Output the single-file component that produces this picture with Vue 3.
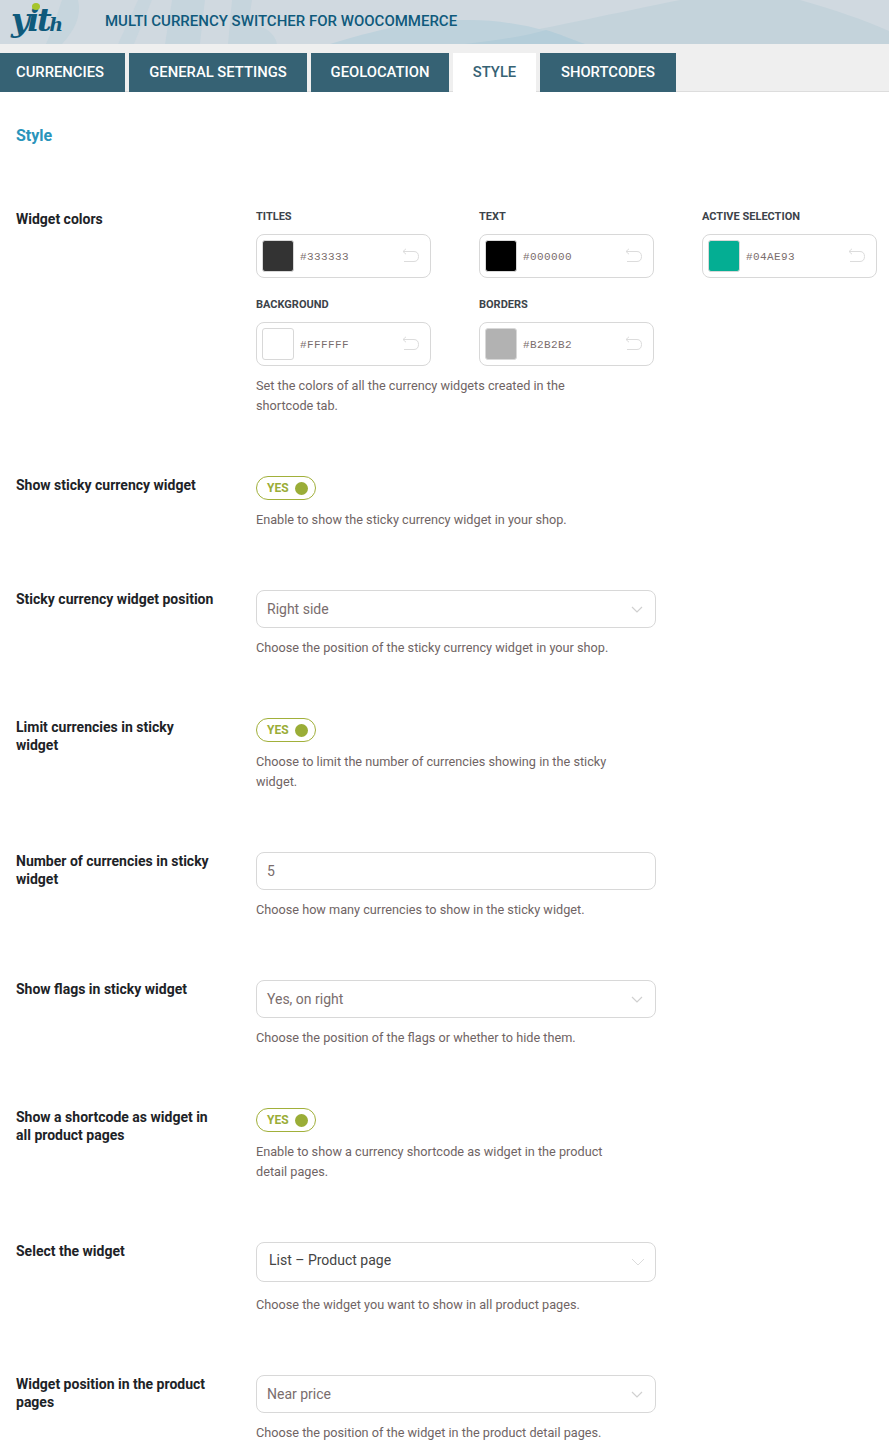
<template>
  <div class="page">
    <header class="top">
      <svg class="waves" viewBox="0 0 889 44" preserveAspectRatio="none">
        <path d="M460 44C540 30 620 12 680 0H800C835 10 865 20 889 31V44Z" fill="#c4d3db" />
        <path d="M330 44C390 26 420 20 470 20C510 20 550 30 585 44Z" fill="#bed2dc" />
        <path d="M465 44C500 40 530 35 546 30C560 34 570 39 585 44Z" fill="#b4cdd9" />
        <path d="M46 44C55 25 58 10 62 0H78C82 15 75 30 62 44Z" fill="#c6d5dd" />
        <path d="M118 44L138 0H152L134 44Z" fill="#c8d6de" />
        <path d="M165 44L172 0H205L200 44Z" fill="#c6d5dd" />
        <path d="M228 44L232 0H252L248 26C262 24 275 32 277 44Z" fill="#c6d5dd" />
      </svg>
      <div class="logo"><span class="dot"></span>yit<small>h</small></div>
      <div class="plugin">MULTI CURRENCY SWITCHER FOR WOOCOMMERCE</div>
    </header>

    <nav class="tabs">
      <a v-for="tab in tabs" :key="tab" class="tab" :class="{ active: tab === 'STYLE' }">{{ tab }}</a>
    </nav>

    <main class="content">
      <h2 class="title">Style</h2>

      <section class="row">
        <div class="label">Widget colors</div>
        <div>
          <div class="colors">
            <div v-for="c in colors" :key="c.name" class="color">
              <div class="color-name">{{ c.name }}</div>
              <div class="color-box">
                <span class="swatch" :style="{ background: c.hex }"></span>
                <span class="hex">{{ c.hex }}</span>
                <svg class="undo" width="18" height="16" viewBox="0 0 18 16">
                  <path d="M1 3.5H12C15 3.5 16.5 5.5 16.5 8.5C16.5 11.5 15 13.5 12 13.5H2M4 .8L1 3.5L4 6.2" fill="none" stroke="#dcdcdc" stroke-width="1" />
                </svg>
              </div>
            </div>
          </div>
          <p class="desc">Set the colors of all the currency widgets created in the shortcode tab.</p>
        </div>
      </section>

      <section v-for="row in rows" :key="row.label" class="row">
        <div class="label">{{ row.label }}</div>
        <div>
          <div v-if="row.type === 'toggle'" class="toggle"><span>YES</span><i></i></div>
          <div v-else-if="row.type === 'input'" class="field">{{ row.value }}</div>
          <div v-else-if="row.type === 'select'" class="field select">
            {{ row.value }}
            <svg class="chev" width="12" height="7" viewBox="0 0 12 7"><path d="M1 1L6 6L11 1" fill="none" stroke="#d0d0d0" stroke-width="1.2" /></svg>
          </div>
          <div v-else class="field select big">
            {{ row.value }}
            <svg class="chev" width="14" height="8" viewBox="0 0 14 8"><path d="M1 1L7 7L13 1" fill="none" stroke="#dcdcdc" stroke-width="1" /></svg>
          </div>
          <p class="desc" :class="{ wide: row.type === 'big' }">{{ row.desc }}</p>
        </div>
      </section>
    </main>
  </div>
</template>

<script setup>
const tabs = ['CURRENCIES', 'GENERAL SETTINGS', 'GEOLOCATION', 'STYLE', 'SHORTCODES']

const colors = [
  { name: 'TITLES', hex: '#333333' },
  { name: 'TEXT', hex: '#000000' },
  { name: 'ACTIVE SELECTION', hex: '#04AE93' },
  { name: 'BACKGROUND', hex: '#FFFFFF' },
  { name: 'BORDERS', hex: '#B2B2B2' }
]

const rows = [
  { label: 'Show sticky currency widget', type: 'toggle', desc: 'Enable to show the sticky currency widget in your shop.' },
  { label: 'Sticky currency widget position', type: 'select', value: 'Right side', desc: 'Choose the position of the sticky currency widget in your shop.' },
  { label: 'Limit currencies in sticky widget', type: 'toggle', desc: 'Choose to limit the number of currencies showing in the sticky widget.' },
  { label: 'Number of currencies in sticky widget', type: 'input', value: '5', desc: 'Choose how many currencies to show in the sticky widget.' },
  { label: 'Show flags in sticky widget', type: 'select', value: 'Yes, on right', desc: 'Choose the position of the flags or whether to hide them.' },
  { label: 'Show a shortcode as widget in all product pages', type: 'toggle', desc: 'Enable to show a currency shortcode as widget in the product detail pages.' },
  { label: 'Select the widget', type: 'big', value: 'List – Product page', desc: 'Choose the widget you want to show in all product pages.' },
  { label: 'Widget position in the product pages', type: 'select', value: 'Near price', desc: 'Choose the position of the widget in the product detail pages.' }
]
</script>

<style>
html, body { background: #fff; }
</style>

<style scoped>
.page {
  font-family: Roboto, "Liberation Sans", sans-serif;
  height: 1449px;
  overflow: hidden;
  background: #fff;
}
.top {
  position: relative;
  height: 44px;
  background: #d0d9e0;
  display: flex;
  align-items: center;
  overflow: hidden;
}
.waves {
  position: absolute;
  inset: 0;
  width: 100%;
  height: 100%;
}
.logo {
  position: relative;
  width: 105px;
  padding-left: 11px;
  box-sizing: border-box;
  font-family: "DejaVu Serif", serif;
  font-style: italic;
  font-weight: bold;
  font-size: 32px;
  line-height: 44px;
  letter-spacing: -2.4px;
  color: #0f5a7c;
}
.logo small {
  font-size: 19px;
  letter-spacing: 0;
}
.dot {
  position: absolute;
  left: 32px;
  top: 5px;
  width: 8px;
  height: 7px;
  border-radius: 50%;
  background: #a6c52a;
  z-index: 1;
}
.plugin {
  position: relative;
  padding-bottom: 2px;
  font-size: 15px;
  font-weight: 500;
  color: #0f5a7c;
}
.tabs {
  display: flex;
  gap: 4px;
  height: 48px;
  padding-top: 9px;
  box-sizing: border-box;
  background: #efefef;
  border-bottom: 1px solid #ddd;
}
.tab {
  height: 39px;
  line-height: 38px;
  box-sizing: border-box;
  text-align: center;
  font-size: 14.8px;
  font-weight: 500;
  color: #fff;
  background: #366274;
}
.tab:nth-child(1) { width: 125px; padding-right: 5px; }
.tab:nth-child(2) { width: 178px; }
.tab:nth-child(3) { width: 138px; }
.tab:nth-child(4) { width: 83px; }
.tab:nth-child(5) { width: 136px; }
.tab.active {
  background: #fff;
  color: #366274;
}
.content {
  padding: 33px 0 0 16px;
}
.title {
  margin: 0 0 63px;
  font-size: 16px;
  line-height: 22px;
  font-weight: 700;
  color: #2a94bb;
}
.row {
  display: grid;
  grid-template-columns: 240px 1fr;
  margin-bottom: 60px;
}
.label {
  width: 200px;
  font-size: 14px;
  line-height: 18px;
  font-weight: 700;
  color: #1d2327;
}
.colors {
  display: grid;
  grid-template-columns: repeat(3, 175px);
  column-gap: 48px;
  row-gap: 20px;
}
.color-name {
  font-size: 11px;
  line-height: 14px;
  font-weight: 700;
  color: #3c434a;
  margin-bottom: 10px;
}
.color-box {
  display: flex;
  align-items: center;
  height: 44px;
  box-sizing: border-box;
  padding: 0 10px 0 5px;
  border: 1px solid #d8d8d8;
  border-radius: 8px;
}
.swatch {
  width: 32px;
  height: 32px;
  box-sizing: border-box;
  border: 1px solid #d8d8d8;
  border-radius: 3px;
}
.hex {
  flex: 1;
  margin-left: 6px;
  padding-top: 2px;
  font-family: "Liberation Mono", monospace;
  font-size: 11px;
  letter-spacing: 0.4px;
  color: #7a6d6d;
}
.desc {
  width: 362px;
  margin: 10px 0 0;
  font-size: 12.7px;
  line-height: 20px;
  color: #6f6464;
}
.desc.wide {
  margin-top: 13px;
}
.toggle {
  display: flex;
  align-items: center;
  justify-content: space-between;
  width: 60px;
  height: 24px;
  box-sizing: border-box;
  padding: 0 7px 0 10px;
  border: 1px solid #a1b03a;
  border-radius: 12px;
  font-size: 12px;
  font-weight: 700;
  color: #9aad37;
}
.toggle i {
  width: 13px;
  height: 13px;
  border-radius: 50%;
  background: #9aad37;
}
.field {
  width: 400px;
  height: 38px;
  line-height: 36px;
  box-sizing: border-box;
  padding: 0 10px;
  border: 1px solid #d8d8d8;
  border-radius: 8px;
  font-size: 14px;
  color: #7a6d6d;
}
.select {
  display: flex;
  align-items: center;
  justify-content: space-between;
  padding-right: 12px;
}
.select.big {
  height: 40px;
  line-height: 34px;
  padding-left: 12px;
  padding-right: 10px;
  color: #444;
  align-items: flex-start;
}
.select.big .chev {
  margin-top: 15px;
}
</style>
